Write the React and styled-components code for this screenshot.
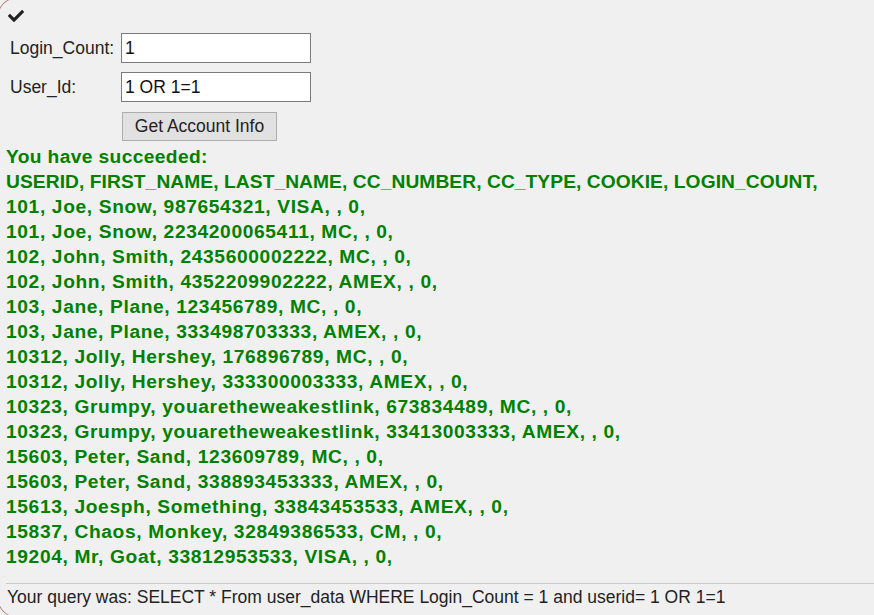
import React from "react";
import styled, { createGlobalStyle } from "styled-components";

const Global = createGlobalStyle`
  html, body {
    margin: 0;
    padding: 0;
    background: #f0f0f0;
    overflow: hidden;
  }
  body {
    font-family: "Liberation Sans", Arial, sans-serif;
    color: #222;
  }
`;

const Frame = styled.div`
  box-sizing: border-box;
  margin: -3px 0 0 -3px;
  width: calc(100% + 3px);
  height: 621px;
  border: 1px solid #b98282;
  border-right: none;
  border-radius: 21px 0 0 21px;
  padding: 10px 0 0 8px;
  display: flex;
  flex-direction: column;
  overflow: hidden;
`;

const CheckMark = styled.div`
  height: 15px;
  margin-left: 2px;
  color: #222;
  display: flex;
`;

const Form = styled.div`
  margin-top: 10px;
  margin-left: 4px;
  display: grid;
  grid-template-columns: 111px 190px;
  grid-auto-rows: 30px;
  row-gap: 9px;
  align-items: center;
`;

const Label = styled.label`
  font-size: 17.5px;
  color: #222;
`;

const Input = styled.input`
  box-sizing: border-box;
  width: 190px;
  height: 30px;
  border: 1px solid #7a7a7a;
  background: #fff;
  font-family: "Liberation Sans", Arial, sans-serif;
  font-size: 17.5px;
  color: #111;
  padding: 0 3px;
  margin: 0;
  outline: none;
`;

const Button = styled.button`
  grid-column: 2;
  justify-self: start;
  box-sizing: border-box;
  margin-left: 1px;
  height: 29px;
  width: 155px;
  padding: 0;
  background: #e1e1e1;
  border: 1px solid #adadad;
  font-family: "Liberation Sans", Arial, sans-serif;
  font-size: 17.5px;
  color: #222;
`;

const Output = styled.div`
  margin-top: 3px;
  color: #008000;
  font-weight: bold;
  font-size: 19.2px;
  line-height: 25px;
  white-space: nowrap;
`;

const Line = styled.div`
  letter-spacing: ${(p) => p.$spacing}px;
`;

const Rule = styled.hr`
  margin: 14px 0 0 0;
  border: none;
  border-top: 1px solid #c8c8c8;
  height: 0;
`;

const Query = styled.div`
  margin-top: 3px;
  margin-left: 1px;
  font-size: 17.5px;
  color: #222;
  white-space: nowrap;
`;

const header = "USERID, FIRST_NAME, LAST_NAME, CC_NUMBER, CC_TYPE, COOKIE, LOGIN_COUNT,";

const rows = [
  "101, Joe, Snow, 987654321, VISA, , 0,",
  "101, Joe, Snow, 2234200065411, MC, , 0,",
  "102, John, Smith, 2435600002222, MC, , 0,",
  "102, John, Smith, 4352209902222, AMEX, , 0,",
  "103, Jane, Plane, 123456789, MC, , 0,",
  "103, Jane, Plane, 333498703333, AMEX, , 0,",
  "10312, Jolly, Hershey, 176896789, MC, , 0,",
  "10312, Jolly, Hershey, 333300003333, AMEX, , 0,",
  "10323, Grumpy, youaretheweakestlink, 673834489, MC, , 0,",
  "10323, Grumpy, youaretheweakestlink, 33413003333, AMEX, , 0,",
  "15603, Peter, Sand, 123609789, MC, , 0,",
  "15603, Peter, Sand, 338893453333, AMEX, , 0,",
  "15613, Joesph, Something, 33843453533, AMEX, , 0,",
  "15837, Chaos, Monkey, 32849386533, CM, , 0,",
  "19204, Mr, Goat, 33812953533, VISA, , 0,",
];

function Check() {
  return (
    <svg width="16" height="15" viewBox="0 0 512 480" fill="currentColor">
      <path d="M173.898 439.404l-166.4-166.4c-9.997-9.997-9.997-26.206 0-36.204l36.203-36.204c9.997-9.998 26.207-9.998 36.204 0L192 312.69 432.095 72.596c9.997-9.997 26.207-9.997 36.204 0l36.203 36.204c9.997 9.997 9.997 26.206 0 36.204l-294.4 294.401c-9.998 9.997-26.207 9.997-36.204-.001z" />
    </svg>
  );
}

export default function App() {
  return (
    <>
      <Global />
      <Frame>
        <CheckMark>
          <Check />
        </CheckMark>
        <Form>
          <Label>Login_Count:</Label>
          <Input defaultValue="1" />
          <Label>User_Id:</Label>
          <Input defaultValue="1 OR 1=1" />
          <Button>Get Account Info</Button>
        </Form>
        <Output>
          <Line $spacing={0.37}>You have succeeded:</Line>
          <Line $spacing={0.08}>{header}</Line>
          {rows.map((r, i) => (
            <Line key={i} $spacing={0.63}>
              {r}
            </Line>
          ))}
        </Output>
        <Rule />
        <Query>
          Your query was: SELECT * From user_data WHERE Login_Count = 1 and userid= 1 OR 1=1
        </Query>
      </Frame>
    </>
  );
}
